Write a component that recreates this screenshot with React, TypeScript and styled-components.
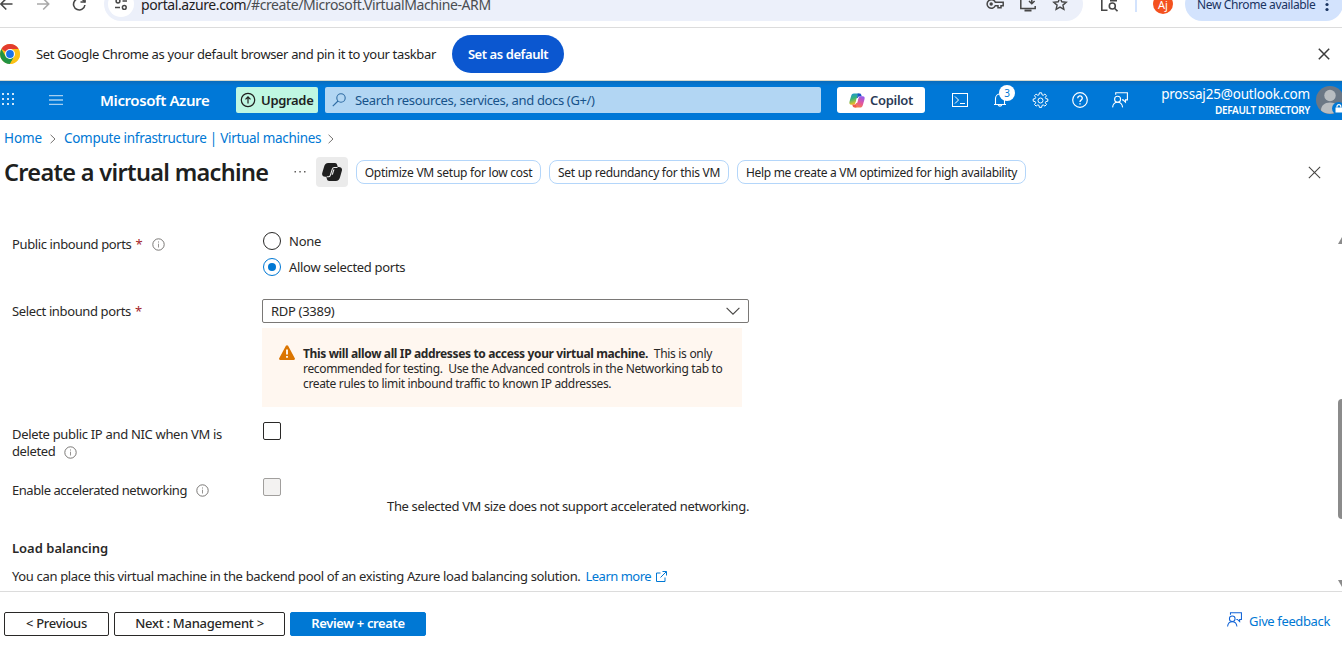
import React from "react";
import styled, { createGlobalStyle } from "styled-components";

const GlobalStyle = createGlobalStyle`
  * { box-sizing: border-box; }
  body {
    margin: 0;
    background: #fff;
    color: #292827;
    font-family: "Segoe UI", "Noto Sans", "Open Sans", sans-serif;
    font-size: 13px;
  }
  button { font-family: inherit; cursor: pointer; }
`;

const Page = styled.div`
  display: flex;
  flex-direction: column;
  width: 1342px;
  height: 652px;
  overflow: hidden;
  background: #fff;
`;

const Text = styled.span<{ $track?: number }>`
  white-space: pre;
  letter-spacing: ${(p) => p.$track ?? -0.35}px;
`;

/* Browser toolbar */

const Toolbar = styled.div`
  display: flex;
  align-items: flex-end;
  flex: none;
  height: 28px;
  padding-bottom: 6px;
  border-bottom: 1px solid #dcdcdc;
  overflow: hidden;
`;

const NavButtons = styled.div`
  display: flex;
  align-items: center;
  flex: none;
  height: 34px;
  width: 104px;
  gap: 21px;
  svg { flex: none; }
`;

const Omnibox = styled.div`
  display: flex;
  align-items: center;
  flex: none;
  width: 979px;
  height: 34px;
  padding: 0 15px 0 4px;
  border-radius: 17px;
  background: #ecf0fa;
`;

const SiteInfo = styled.div`
  display: flex;
  align-items: center;
  justify-content: center;
  width: 26px;
  height: 26px;
  margin-right: 7px;
  border-radius: 50%;
  background: #fff;
`;

const Url = styled.div`
  flex: 1;
  color: #4a4d51;
  font-size: 14px;
  b { font-weight: 400; color: #1f2023; }
`;

const OmniboxActions = styled.div`
  display: flex;
  align-items: center;
  gap: 15px;
`;

const ToolbarEnd = styled.div`
  display: flex;
  align-items: center;
  flex: none;
  height: 34px;
  padding-left: 17px;
`;

const Divider = styled.div`
  width: 2px;
  height: 16px;
  margin: 0 16px 0 17px;
  background: #d3e3fd;
`;

const Profile = styled.div`
  display: flex;
  align-items: center;
  justify-content: center;
  width: 20px;
  height: 20px;
  margin-right: 12px;
  border-radius: 50%;
  background: #f4511e;
  color: #fff;
  font-size: 11px;
`;

const UpdateChip = styled.div`
  display: flex;
  align-items: center;
  width: 158px;
  height: 34px;
  padding-left: 12px;
  border-radius: 17px;
  background: #d3e3fd;
  color: #1a3461;
  font-size: 12px;
  gap: 10px;
`;

/* Default browser prompt */

const InfoBar = styled.div`
  display: flex;
  align-items: center;
  flex: none;
  height: 53px;
  padding-right: 12px;
  border-bottom: 1px solid #d5d9cf;
  color: #1f1f1f;
`;

const InfoText = styled.div`
  width: 432px;
  padding-left: 16px;
`;

const DefaultButton = styled.button`
  width: 112px;
  height: 38px;
  margin-right: auto;
  padding: 0;
  border: 0;
  border-radius: 19px;
  background: #0b57d0;
  color: #fff;
  font-size: 13px;
  font-weight: 600;
`;

/* Azure header */

const AzureBar = styled.header`
  display: flex;
  align-items: center;
  flex: none;
  height: 39px;
  padding-bottom: 1px;
  background: linear-gradient(#0a6cbc, #0078d7 5px);
  color: #fff;
`;

const Launcher = styled.div`
  display: flex;
  width: 49px;
  padding: 0 0 2px 2px;
`;

const Menu = styled.div`
  display: flex;
  width: 51px;
`;

const Brand = styled.div`
  width: 136px;
  font-size: 15px;
  font-weight: 600;
`;

const UpgradeButton = styled.button`
  display: flex;
  align-items: center;
  width: 82px;
  height: 26px;
  margin-right: 7px;
  padding: 0 0 0 4px;
  gap: 5px;
  border: 0;
  border-radius: 2px;
  background: #bff7e2;
  color: #201f1e;
  font-size: 13px;
  font-weight: 600;
`;

const SearchBox = styled.div`
  display: flex;
  align-items: center;
  width: 496px;
  height: 26px;
  margin-right: 16px;
  padding-left: 7px;
  gap: 8px;
  border-radius: 2px;
  background: #b2d6f3;
  color: #17538a;
  font-size: 13px;
`;

const CopilotButton = styled.button`
  display: flex;
  align-items: center;
  width: 88px;
  height: 26px;
  margin-right: 15px;
  padding: 0 0 0 12px;
  gap: 5px;
  border: 0;
  border-radius: 3px;
  background: #fff;
  color: #2a3a56;
  font-size: 13px;
  font-weight: 600;
`;

const HeaderAction = styled.div`
  position: relative;
  display: flex;
  align-items: center;
  justify-content: center;
  width: 40px;
  height: 38px;
`;

const Badge = styled.span`
  position: absolute;
  left: 19px;
  top: 4px;
  width: 16px;
  height: 16px;
  border-radius: 50%;
  background: #fff;
  color: #0078d4;
  font-size: 10px;
  line-height: 16px;
  text-align: center;
`;

const Account = styled.div`
  display: flex;
  flex-direction: column;
  align-items: flex-end;
  flex: none;
  width: 170px;
  margin-right: 6px;
  padding-top: 3px;
`;

const Email = styled.div`
  font-size: 13.5px;
  line-height: 17px;
`;

const Directory = styled.div`
  font-size: 10px;
  font-weight: 600;
  line-height: 15px;
`;

/* Blade heading */

const Breadcrumb = styled.nav`
  display: flex;
  align-items: center;
  flex: none;
  height: 36px;
  padding-left: 4px;
  color: #0078d4;
  font-size: 13.5px;
`;

const Crumb = styled.a<{ $width: number }>`
  width: ${(p) => p.$width}px;
`;

const CrumbArrow = styled.span`
  display: flex;
  width: 14px;
  padding-top: 2px;
`;

const TitleRow = styled.div`
  display: flex;
  align-items: center;
  flex: none;
  height: 32px;
  padding: 0 21px 0 4px;
`;

const Title = styled.h1`
  width: 290px;
  margin: 0;
  padding-bottom: 1px;
  color: #201f1e;
  font-size: 23.5px;
  font-weight: 600;
  line-height: 30px;
`;

const MoreDots = styled.div`
  display: flex;
  width: 22px;
`;

const CopilotTile = styled.div`
  display: flex;
  align-items: center;
  justify-content: center;
  width: 32px;
  height: 30px;
  margin-right: 8px;
  border-radius: 4px;
  background: #ebebeb;
`;

const Suggestion = styled.button<{ $width: number }>`
  width: ${(p) => p.$width}px;
  height: 24px;
  margin-right: 8px;
  padding: 1px 0 0;
  border: 1px solid #b4d6fa;
  border-radius: 8px;
  background: #fff;
  color: #242424;
  font-size: 12px;
  line-height: 21px;
`;

const CloseBlade = styled.div`
  display: flex;
  margin-left: auto;
  margin-right: 0;
`;

/* Form */

const Body = styled.main`
  display: flex;
  flex: 1;
  min-height: 0;
  overflow: hidden;
`;

const Form = styled.div`
  flex: 1;
  padding: 44px 0 0 12px;
`;

const FormRow = styled.div<{ $height: number }>`
  display: flex;
  align-items: flex-start;
  height: ${(p) => p.$height}px;
`;

const Label = styled.div<{ $line?: number; $top?: number }>`
  width: 250px;
  padding-top: ${(p) => p.$top ?? 3}px;
  line-height: ${(p) => p.$line ?? 18}px;
`;

const LabelLine = styled.div`
  display: flex;
  align-items: center;
`;

const Required = styled.span`
  margin-left: 4px;
  color: #a4262c;
`;

const InfoIcon = styled.span`
  display: flex;
  margin-left: 9px;
  padding-top: 1px;
`;

const Control = styled.div`
  display: flex;
  flex-direction: column;
  width: 487px;
`;

const RadioOption = styled.label`
  display: flex;
  align-items: center;
  height: 18px;
  margin: 0 0 8px 1px;
  gap: 8px;
`;

const Radio = styled.span<{ $checked?: boolean }>`
  width: 18px;
  height: 18px;
  padding: 4px;
  border: 1px solid ${(p) => (p.$checked ? "#0078d4" : "#292827")};
  border-radius: 50%;
  background: ${(p) => (p.$checked ? "#0078d4" : "transparent")};
  background-clip: content-box;
`;

const Select = styled.div`
  display: flex;
  align-items: center;
  justify-content: space-between;
  height: 24px;
  margin-bottom: 5px;
  padding: 0 8px;
  border: 1px solid #7a7876;
  border-radius: 2px;
`;

const Warning = styled.div`
  display: flex;
  width: 480px;
  height: 79px;
  padding: 17px 0 0 17px;
  gap: 8px;
  background: #fff7f0;
  font-size: 12px;
  line-height: 15px;
  svg { flex: none; }
`;

const WarningText = styled.div`
  display: flex;
  flex-direction: column;
  margin-top: 1px;
  b { font-weight: 700; }
`;

const Checkbox = styled.span<{ $disabled?: boolean }>`
  width: 18px;
  height: 18px;
  margin-left: 1px;
  border: 1px solid ${(p) => (p.$disabled ? "#a19f9d" : "#292827")};
  border-radius: 2px;
  background: ${(p) => (p.$disabled ? "#f3f2f1" : "#fff")};
`;

const Note = styled.div`
  margin-top: 1px;
  line-height: 18px;
  text-align: right;
`;

const SectionTitle = styled.h2`
  margin: 0 0 10px;
  font-size: 13px;
  font-weight: 600;
  line-height: 18px;
`;

const Paragraph = styled.div`
  display: flex;
  align-items: center;
  line-height: 18px;
`;

const LearnMore = styled.a`
  display: flex;
  align-items: center;
  margin-left: 5px;
  gap: 5px;
  color: #0078d4;
`;

const ScrollTrack = styled.div`
  display: flex;
  flex-direction: column;
  width: 4px;
  margin-top: 47px;
  svg { flex: none; }
`;

const ScrollThumb = styled.div`
  height: 120px;
  margin: 154px 0 60px;
  border-radius: 4px 0 0 4px;
  background: #8b8b8b;
`;

/* Footer */

const Footer = styled.footer`
  display: flex;
  align-items: flex-start;
  flex: none;
  height: 61px;
  padding: 20px 12px 0 4px;
  border-top: 1px solid #dcdcdc;
  gap: 5px;
`;

const FooterButton = styled.button<{ $width: number; $primary?: boolean }>`
  width: ${(p) => p.$width}px;
  height: 24px;
  padding: 0 0 2px;
  border: 1px solid ${(p) => (p.$primary ? "#0078d4" : "#292827")};
  border-radius: 2px;
  background: ${(p) => (p.$primary ? "#0078d4" : "#fff")};
  color: ${(p) => (p.$primary ? "#fff" : "#292827")};
  font-size: 13px;
  font-weight: ${(p) => (p.$primary ? 600 : 500)};
  line-height: 20px;
`;

const Feedback = styled.a`
  display: flex;
  align-items: center;
  height: 18px;
  margin-left: auto;
  gap: 7px;
  color: #0078d4;
  svg { margin-bottom: 3px; }
`;

const Info = () => (
  <InfoIcon>
    <svg width="13" height="13" viewBox="0 0 13 13" fill="none" stroke="#6b6967">
      <circle cx="6.5" cy="6.5" r="5.7" strokeWidth="0.9" />
      <path d="M6.5 5.7v3.8M6.5 3.4v1.2" strokeWidth="0.9" stroke="#8a8886" />
    </svg>
  </InfoIcon>
);

const PersonFeedback = ({ size, color }: { size: number; color: string }) => (
  <svg width={size} height={size} viewBox="0 0 16 16" fill="none" stroke={color} strokeWidth="1.1">
    <circle cx="5.6" cy="7.2" r="3" />
    <path d="M.6 15.4c.3-3 2.3-5.1 5-5.1s4.7 2.1 5 5.1" />
    <path d="M3.7 2.8V.7h11.700v7.200h-1.900v2.300l-2.400-2.300h-1.100" />
  </svg>
);

const Close = ({ size, color, width }: { size: number; color: string; width: number }) => (
  <svg width={size} height={size} viewBox="0 0 12 12" stroke={color} strokeWidth={width}>
    <path d="M.8.8l10.400 10.400M11.200.8L.8 11.200" />
  </svg>
);

const Chevron = () => (
  <svg width="6" height="10" viewBox="0 0 6 10" fill="none" stroke="#767472">
    <path d="M.6.8L5 5 .6 9.200" />
  </svg>
);

const ChromeLogo = () => (
  <svg width="20" height="20" viewBox="0 0 20 20">
    <circle cx="10" cy="10" r="10" fill="#fbc116" />
    <path d="M10 10L1.340 5A10 10 0 0 1 18.660 5z" fill="#e33b2e" />
    <path d="M1.340 5A10 10 0 0 0 10 20l4.300-7.500L10 10 5.700 12.500z" fill="#229342" />
    <path d="M10 5h8.660A10 10 0 0 1 10 20l4.330-7.500z" fill="#fbc116" />
    <circle cx="10" cy="10" r="5" fill="#fff" />
    <circle cx="10" cy="10" r="3.900" fill="#1a73e8" />
  </svg>
);

const CopilotColor = () => (
  <svg width="16" height="15" viewBox="0 0 16 15">
    <defs>
      <linearGradient id="cpLeft" x1="0" y1="0" x2="0.3" y2="1">
        <stop offset="0" stopColor="#1b8fe0" />
        <stop offset="0.5" stopColor="#35b57c" />
        <stop offset="1" stopColor="#f4c020" />
      </linearGradient>
      <linearGradient id="cpRight" x1="0.6" y1="0" x2="0.2" y2="1">
        <stop offset="0" stopColor="#9a5be8" />
        <stop offset="0.5" stopColor="#e3559c" />
        <stop offset="1" stopColor="#f8853e" />
      </linearGradient>
    </defs>
    <path d="M5 .5h5.500c-1 .3-1.500 1-1.900 2.300L6.700 9.500c-.5 1.500-1.200 2.200-2.700 2.200H2.300C.6 11.700 0 10.500.5 8.800l1.700-6C2.700 1.200 3.500.5 5 .5z" fill="url(#cpLeft)" />
    <path d="M8.700.5h1.900c1 0 1.500.6 1.800 1.700l.4 1.400h-2.200c-1 0-1.500.5-1.800 1.400L8 5z" fill="#1c55c8" />
    <path d="M11 14.500H5.500c1-.3 1.500-1 1.900-2.300l1.900-6.700c.5-1.500 1.200-2.200 2.700-2.200h1.700c1.700 0 2.300 1.200 1.800 2.900l-1.700 6c-.5 1.600-1.300 2.300-2.800 2.300z" fill="url(#cpRight)" />
    <path d="M7.300 14.500H5.400c-1 0-1.500-.6-1.800-1.700l-.4-1.200h2.200c1 0 1.500-.6 1.800-1.600l.8.3z" fill="#f05a4a" />
    <path d="M7.800 5.200h1.500L8 9.900H6.500z" fill="#fff" />
  </svg>
);

const CopilotMono = () => (
  <svg width="20" height="18" viewBox="0 0 20 18">
    <path d="M6.200 0H13c1.200 0 1.900.8 2.200 2l.5 2h1.100c2.600 0 3.700 1.700 3 4l-1.700 6c-.7 2.700-2 4-4.300 4H7.200c-1.300 0-2-.8-2.300-2l-.6-2.300H3.200C.7 13.700-.4 12 .3 9.700L2 4C2.700 1.300 4 0 6.200 0z" fill="#1f1f1f" />
    <path d="M15.500 4.500h-3.200c-1.200 0-1.700.6-2.100 1.800L8.300 12.300c-.3 1-.8 1.500-1.700 1.500H4.800" stroke="#ebebeb" strokeWidth="1.100" fill="none" />
    <path d="M11.300 6.500h1.200l-1.700 5.300H9.600z" fill="#ebebeb" />
  </svg>
);

export default function App() {
  return (
    <Page>
      <GlobalStyle />
      <Toolbar>
        <NavButtons>
          <svg width="13" height="14" viewBox="0 0 13 14" fill="none" stroke="#474747" strokeWidth="1.600">
            <path d="M12.500 7H1M6.300 1.500L.8 7l5.500 5.500" />
          </svg>
          <svg width="16" height="14" viewBox="0 0 16 14" fill="none" stroke="#a9a9a9" strokeWidth="1.600">
            <path d="M3 7h11.500M9.200 1.500L14.700 7l-5.500 5.500" />
          </svg>
          <svg width="16" height="16" viewBox="0 0 16 16" fill="none" stroke="#474747" strokeWidth="1.600">
            <path d="M13.900 9A5.700 5.700 0 1 1 12.600 4.600L14 6" />
            <path d="M14 1.500V6H9.500" />
          </svg>
        </NavButtons>
        <Omnibox>
          <SiteInfo>
            <svg width="14" height="12" viewBox="0 0 14 12" fill="none" stroke="#474747" strokeWidth="1.500">
              <path d="M8.500 3H13M1 9.500h5" />
              <circle cx="4" cy="3" r="1.900" />
              <circle cx="10.300" cy="9.500" r="1.900" />
            </svg>
          </SiteInfo>
          <Url>
            <Text $track={-0.4}><b>portal.azure.com</b>/#create/Microsoft.VirtualMachine-ARM</Text>
          </Url>
          <OmniboxActions>
            <svg width="18" height="12" viewBox="0 0 18 12" fill="none" stroke="#474747" strokeWidth="1.500">
              <path d="M9.300 4.200A4.300 4.300 0 1 0 9.300 7.800H12v2h3v-2h2.200V4.200z" />
              <circle cx="5.200" cy="6" r="1.700" fill="#474747" stroke="none" />
            </svg>
            <svg width="18" height="16" viewBox="0 0 18 16" fill="none" stroke="#474747" strokeWidth="1.500">
              <path d="M8.500 1.500h-6.700v11h14.400V10M12.800 1v6.500M10 5l2.800 2.800L15.600 5" />
              <path d="M5.500 14.500h7" strokeWidth="2" />
            </svg>
            <svg width="16" height="16" viewBox="0 0 16 16" fill="none" stroke="#474747" strokeWidth="1.400">
              <path d="M8 1.800l1.800 4 4.400.4-3.300 2.900 1 4.300L8 11.100l-3.900 2.300 1-4.300L1.800 6.200l4.400-.4z" />
            </svg>
          </OmniboxActions>
        </Omnibox>
        <ToolbarEnd>
          <svg width="18" height="18" viewBox="0 0 18 18" fill="none" stroke="#474747" strokeWidth="1.600">
            <path d="M7.500 15.200H1.800V2h14.400v3.500" />
            <path d="M10 5.500h7" strokeWidth="2" />
            <circle cx="12.300" cy="11" r="3" />
            <path d="M14.500 13.200l3 3" />
          </svg>
          <Divider />
          <Profile>Aj</Profile>
          <UpdateChip>
            <Text $track={-0.38}>New Chrome available</Text>
            <svg width="4" height="16" viewBox="0 0 4 16" fill="#1a3461">
              <circle cx="2" cy="3" r="1.600" />
              <circle cx="2" cy="8.500" r="1.600" />
              <circle cx="2" cy="13.500" r="1.600" />
            </svg>
          </UpdateChip>
        </ToolbarEnd>
      </Toolbar>

      <InfoBar>
        <ChromeLogo />
        <InfoText>
          <Text $track={-0.35}>Set Google Chrome as your default browser and pin it to your taskbar</Text>
        </InfoText>
        <DefaultButton>
          <Text $track={-0.43}>Set as default</Text>
        </DefaultButton>
        <Close size={12} color="#3c3c3c" width={1.5} />
      </InfoBar>

      <AzureBar>
        <Launcher>
          <svg width="12" height="12" viewBox="0 0 12 12" fill="#cfe6f9">
            {[0, 5, 10].map((y) => [0, 5, 10].map((x) => <rect key={`${x}-${y}`} x={x} y={y} width="2" height="2" />))}
          </svg>
        </Launcher>
        <Menu>
          <svg width="14" height="10" viewBox="0 0 14 10" stroke="#a6cff0" strokeWidth="1.300">
            <path d="M0 .7h14M0 5h14M0 9.300h14" />
          </svg>
        </Menu>
        <Brand>
          <Text $track={-0.4}>Microsoft Azure</Text>
        </Brand>
        <UpgradeButton>
          <svg width="16" height="16" viewBox="0 0 16 16" fill="none" stroke="#201f1e" strokeWidth="1.200">
            <circle cx="8" cy="8" r="6.700" />
            <path d="M8 11.500v-6.500M5.500 7.300L8 4.800l2.500 2.500" />
          </svg>
          <Text $track={-0.32}>Upgrade</Text>
        </UpgradeButton>
        <SearchBox>
          <svg width="15" height="14" viewBox="0 0 15 14" fill="none" stroke="#2f6ca3" strokeWidth="1.100">
            <circle cx="9" cy="5" r="4.200" />
            <path d="M6 8L.8 13.200" />
          </svg>
          <Text $track={-0.35}>Search resources, services, and docs (G+/)</Text>
        </SearchBox>
        <CopilotButton>
          <CopilotColor />
          <Text $track={-0.3}>Copilot</Text>
        </CopilotButton>
        <HeaderAction>
          <svg width="16" height="14" viewBox="0 0 16 14" fill="none" stroke="#fff">
            <rect x=".5" y=".5" width="15" height="13" />
            <path d="M3 3.500l3.500 3.500L3 10.500M8 10.500h5" />
          </svg>
        </HeaderAction>
        <HeaderAction>
          <svg width="14" height="16" viewBox="0 0 14 16" fill="none" stroke="#fff" strokeWidth="1.100">
            <path d="M1 12.500h12M2.500 12.500V6.500a4.500 4.500 0 0 1 9 0v6M5.200 12.800a1.900 1.900 0 0 0 3.600 0" />
          </svg>
          <Badge>3</Badge>
        </HeaderAction>
        <HeaderAction>
          <svg width="17" height="17" viewBox="0 0 17 17" fill="none" stroke="#fff">
            <circle cx="8.500" cy="8.500" r="2.500" />
            <path d="M7.400 .8h2.200l.4 2 1.200.5 1.700-1.200 1.600 1.600-1.200 1.700.5 1.200 2 .4v2.200l-2 .4-.5 1.200 1.200 1.700-1.600 1.600-1.700-1.200-1.200.5-.4 2H7.400l-.4-2-1.200-.5-1.700 1.200-1.600-1.600 1.200-1.700-.5-1.200-2-.4V7l2-.4.5-1.200-1.200-1.700 1.600-1.600 1.700 1.200L7 2.800z" />
          </svg>
        </HeaderAction>
        <HeaderAction>
          <svg width="16" height="16" viewBox="0 0 16 16" fill="none" stroke="#fff" strokeWidth="1.200">
            <circle cx="8" cy="8" r="7.300" />
            <path d="M5.700 6.200a2.300 2.300 0 1 1 3.400 2C8.300 8.700 8 9 8 10M8 11.200v1.400" strokeWidth="1.400" />
          </svg>
        </HeaderAction>
        <HeaderAction>
          <PersonFeedback size={16} color="#fff" />
        </HeaderAction>
        <Account>
          <Email>
            <Text $track={-0.18}>prossaj25@outlook.com</Text>
          </Email>
          <Directory>
            <Text $track={-0.36}>DEFAULT DIRECTORY</Text>
          </Directory>
        </Account>
        <svg width="26" height="28" viewBox="0 0 26 28">
          <circle cx="14" cy="14" r="14" fill="#6b7785" />
          <circle cx="14" cy="9.500" r="5.700" fill="#b9bdc1" />
          <path d="M5 24.500c0-5 3.500-8 9-8s9 3 9 8A14 14 0 0 1 5 24.500z" fill="#b9bdc1" />
          <circle cx="22.500" cy="22.500" r="6.500" fill="#0078d4" />
          <rect x="19.500" y="21.500" width="7" height="5" fill="#fff" />
          <path d="M21 21.500v-1a1.900 1.900 0 0 1 3.800 0v1" fill="none" stroke="#fff" strokeWidth="1.200" />
        </svg>
      </AzureBar>

      <Breadcrumb>
        <Crumb $width={46}>
          <Text $track={-0.1}>Home</Text>
        </Crumb>
        <CrumbArrow><Chevron /></CrumbArrow>
        <Crumb $width={264}>
          <Text $track={-0.3}>Compute infrastructure | Virtual machines</Text>
        </Crumb>
        <CrumbArrow><Chevron /></CrumbArrow>
      </Breadcrumb>

      <TitleRow>
        <Title>
          <Text $track={-0.68}>Create a virtual machine</Text>
        </Title>
        <MoreDots>
          <svg width="12" height="2" viewBox="0 0 12 2" fill="#605e5c">
            <rect x="0.500" width="1.500" height="1.500" />
            <rect x="5.300" width="1.500" height="1.500" />
            <rect x="10" width="1.500" height="1.500" />
          </svg>
        </MoreDots>
        <CopilotTile><CopilotMono /></CopilotTile>
        <Suggestion $width={185}><Text $track={-0.25}>Optimize VM setup for low cost</Text></Suggestion>
        <Suggestion $width={180}><Text $track={-0.28}>Set up redundancy for this VM</Text></Suggestion>
        <Suggestion $width={289}><Text $track={-0.3}>Help me create a VM optimized for high availability</Text></Suggestion>
        <CloseBlade>
          <Close size={13} color="#484644" width={1} />
        </CloseBlade>
      </TitleRow>

      <Body>
        <Form>
          <FormRow $height={67}>
            <Label>
              <LabelLine>
                <Text $track={-0.38}>Public inbound ports</Text>
                <Required>*</Required>
                <Info />
              </LabelLine>
            </Label>
            <Control>
              <RadioOption><Radio /><Text $track={-0.25}>None</Text></RadioOption>
              <RadioOption><Radio $checked /><Text $track={-0.3}>Allow selected ports</Text></RadioOption>
            </Control>
          </FormRow>

          <FormRow $height={123}>
            <Label>
              <LabelLine>
                <Text $track={-0.37}>Select inbound ports</Text>
                <Required>*</Required>
              </LabelLine>
            </Label>
            <Control>
              <Select>
                <Text $track={-0.3}>RDP (3389)</Text>
                <svg width="14" height="8" viewBox="0 0 14 8" fill="none" stroke="#484644" strokeWidth="1.100">
                  <path d="M.6.8L7 7.200 13.400.8" />
                </svg>
              </Select>
              <Warning>
                <svg width="16" height="15" viewBox="0 0 16 15">
                  <path d="M6.900.8a1.300 1.300 0 0 1 2.200 0l6.700 12.400c.5.900-.1 1.800-1 1.800H1.200c-.9 0-1.500-.9-1-1.800z" fill="#db7500" />
                  <path d="M8 4.500v5M8 11v1.800" stroke="#fff" strokeWidth="1.800" />
                </svg>
                <WarningText>
                  <div>
                    <Text as="b" $track={-0.36}>This will allow all IP addresses to access your virtual machine.</Text>
                    <Text $track={-0.3}>{"  This is only"}</Text>
                  </div>
                  <Text $track={-0.33}>{"recommended for testing.  Use the Advanced controls in the Networking tab to"}</Text>
                  <Text $track={-0.34}>create rules to limit inbound traffic to known IP addresses.</Text>
                </WarningText>
              </Warning>
            </Control>
          </FormRow>

          <FormRow $height={56}>
            <Label $line={17} $top={4}>
              <Text $track={-0.32}>Delete public IP and NIC when VM is</Text>
              <LabelLine>
                <Text $track={-0.4}>deleted</Text>
                <Info />
              </LabelLine>
            </Label>
            <Control><Checkbox /></Control>
          </FormRow>

          <FormRow $height={61}>
            <Label>
              <LabelLine>
                <Text $track={-0.45}>Enable accelerated networking</Text>
                <Info />
              </LabelLine>
            </Label>
            <Control>
              <Checkbox $disabled />
              <Note><Text $track={-0.37}>The selected VM size does not support accelerated networking.</Text></Note>
            </Control>
          </FormRow>

          <SectionTitle><Text $track={0}>Load balancing</Text></SectionTitle>
          <Paragraph>
            <Text $track={-0.35}>You can place this virtual machine in the backend pool of an existing Azure load balancing solution.</Text>
            <LearnMore>
              <Text $track={-0.5}>Learn more</Text>
              <svg width="11" height="11" viewBox="0 0 11 11" fill="none" stroke="#0078d4">
                <path d="M4.500 2H.5v8.500H9V6.500M6.500.5h4v4M10.300.7L4.500 6.500" />
              </svg>
            </LearnMore>
          </Paragraph>
        </Form>
        <ScrollTrack>
          <svg width="4" height="10" viewBox="0 0 4 10"><path d="M0 9L4 2v7z" fill="#8b8b8b" /></svg>
          <ScrollThumb />
          <svg width="4" height="10" viewBox="0 0 4 10"><path d="M0 1h4v7z" fill="#8b8b8b" /></svg>
        </ScrollTrack>
      </Body>

      <Footer>
        <FooterButton $width={105}><Text $track={-0.3}>&lt; Previous</Text></FooterButton>
        <FooterButton $width={171}><Text $track={-0.27}>Next : Management &gt;</Text></FooterButton>
        <FooterButton $width={136} $primary><Text $track={-0.35}>Review + create</Text></FooterButton>
        <Feedback>
          <PersonFeedback size={15} color="#0f62d6" />
          <Text $track={-0.37}>Give feedback</Text>
        </Feedback>
      </Footer>
    </Page>
  );
}
